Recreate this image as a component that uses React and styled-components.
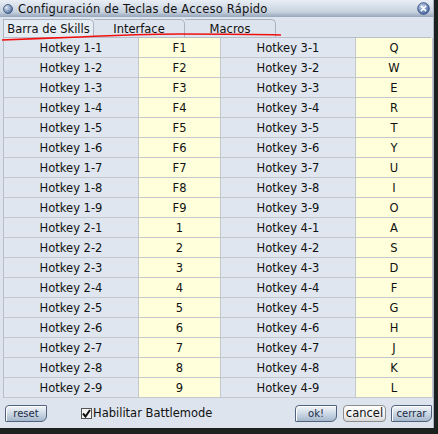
import styled, { createGlobalStyle } from 'styled-components'

const Global = createGlobalStyle`
  html, body {
    margin: 0;
    padding: 0;
    background: #1a211f;
  }
  body {
    font-family: "DejaVu Sans", Verdana, sans-serif;
  }
`

const Window = styled.div`
  position: relative;
  width: 434px;
  height: 428px;
  background: #dde4ee;
  display: flex;
  flex-direction: column;
  box-sizing: border-box;
  border-right: 1px solid #a7b2c2;
`

const TitleBar = styled.div`
  height: 17px;
  display: flex;
  align-items: center;
  gap: 5px;
  padding: 0 3px;
  background: linear-gradient(#e9eef5, #c7d2df 70%, #96a6bb);
  font-size: 11.5px;
  color: #111;
`

const TitleText = styled.span`
  flex: 1;
  white-space: nowrap;
  letter-spacing: 0.2px;
`

const Tabs = styled.div`
  height: 20px;
  display: flex;
  align-items: flex-end;
  padding-left: 3px;
`

const Tab = styled.div`
  width: 91px;
  height: 18px;
  box-sizing: border-box;
  border: 1px solid #aab3c0;
  border-bottom: none;
  border-left: ${({ first }) => (first ? '1px solid #aab3c0' : 'none')};
  border-radius: 0 5px 0 0;
  display: flex;
  align-items: center;
  justify-content: center;
  font-size: 11.5px;
  color: #111;
  background: ${({ active }) => (active ? '#e6ecf3' : '#dde4ee')};
`

const Table = styled.div`
  margin: 0 2px 0 3px;
  display: grid;
  grid-template-columns: 135px 82px 135px 77px;
  border-top: 1px solid #b9bfc8;
  border-left: 1px solid #b9bfc8;
`

const Cell = styled.div`
  height: 19px;
  border-right: 1px solid #c4c8cc;
  border-bottom: 1px solid #c4c8cc;
  display: flex;
  align-items: center;
  justify-content: center;
  font-size: 11.5px;
  color: #111;
  background: ${({ yellow }) => (yellow ? '#ffffdb' : '#dfe6ef')};
`

const Footer = styled.div`
  flex: 1;
  display: flex;
  align-items: center;
  padding: 0 1px 0 5px;
`

const Button = styled.button`
  height: 17px;
  padding: 0;
  margin-left: ${({ ml }) => ml || 0}px;
  width: ${({ w }) => w}px;
  font-family: "DejaVu Sans", Verdana, sans-serif;
  font-size: 10px;
  color: #1b2b44;
  border: 1px solid #50627c;
  border-radius: 4px 1px 6px 1px;
  background: linear-gradient(#f3f6fa, #c9d5e3 55%, #a5b7cc);
  box-shadow: inset 1px 1px 0 #ffffff;
`

const CancelButton = styled.button`
  height: 17px;
  width: 43px;
  margin-left: 6px;
  padding: 0;
  font-family: "DejaVu Sans", Verdana, sans-serif;
  font-size: 11.5px;
  color: #111;
  border: 1px solid #8d8d8d;
  border-radius: 4px;
  background: linear-gradient(#ffffff, #f0f0f0 60%, #d8d8d8);
`

const Check = styled.label`
  display: flex;
  align-items: center;
  gap: 1px;
  margin-left: 34px;
  font-size: 11.5px;
  color: #111;
`

const Box = styled.span`
  width: 11px;
  height: 11px;
  box-sizing: border-box;
  border: 1px solid #555;
  background: #f4f4f4;
  display: flex;
  align-items: center;
  justify-content: center;
`

const Spacer = styled.div`
  flex: 1;
`

const Scribble = styled.svg`
  position: absolute;
  left: 0;
  top: 28px;
  pointer-events: none;
`

const keys1 = ['F1', 'F2', 'F3', 'F4', 'F5', 'F6', 'F7', 'F8', 'F9', '1', '2', '3', '4', '5', '6', '7', '8', '9']
const keys2 = 'QWERTYUIOASDFGHJKL'.split('')

const rows = keys1.map((k, i) => {
  const g = Math.floor(i / 9)
  const n = (i % 9) + 1
  return {
    a: `Hotkey ${g + 1}-${n}`,
    b: k,
    c: `Hotkey ${g + 3}-${n}`,
    d: keys2[i],
  }
})

function App() {
  return (
    <>
      <Global />
      <Window>
        <TitleBar>
          <svg width="10" height="10" viewBox="0 0 10 10">
            <defs>
              <radialGradient id="ti" cx="0.35" cy="0.35" r="0.7">
                <stop offset="0" stopColor="#dfe8f5" />
                <stop offset="1" stopColor="#4b6a9a" />
              </radialGradient>
            </defs>
            <circle cx="5" cy="5" r="4.5" fill="url(#ti)" stroke="#36507a" strokeWidth="0.8" />
          </svg>
          <TitleText>Configuración de Teclas de Acceso Rápido</TitleText>
          <svg width="13" height="13" viewBox="0 0 13 13">
            <defs>
              <radialGradient id="cx" cx="0.4" cy="0.35" r="0.7">
                <stop offset="0" stopColor="#c9d8f0" />
                <stop offset="1" stopColor="#3f5d99" />
              </radialGradient>
            </defs>
            <circle cx="6.5" cy="6.5" r="5.8" fill="url(#cx)" stroke="#2f467a" strokeWidth="0.8" />
            <path d="M4.3 4.3 L8.7 8.7 M8.7 4.3 L4.3 8.7" stroke="#ffffff" strokeWidth="1.6" strokeLinecap="round" />
          </svg>
        </TitleBar>
        <Tabs>
          <Tab first active>Barra de Skills</Tab>
          <Tab>Interface</Tab>
          <Tab>Macros</Tab>
        </Tabs>
        <Table>
          {rows.map((r) => (
            <>
              <Cell key={r.a}>{r.a}</Cell>
              <Cell yellow>{r.b}</Cell>
              <Cell>{r.c}</Cell>
              <Cell yellow>{r.d}</Cell>
            </>
          ))}
        </Table>
        <Footer>
          <Button w={42}>reset</Button>
          <Check>
            <Box>
              <svg width="9" height="9" viewBox="0 0 9 9">
                <path d="M1 4.5 L3.5 7.5 L8 1" fill="none" stroke="#111" strokeWidth="2" />
              </svg>
            </Box>
            Habilitar Battlemode
          </Check>
          <Spacer />
          <Button w={42}>ok!</Button>
          <CancelButton>cancel</CancelButton>
          <Button w={41} ml={5}>cerrar</Button>
        </Footer>
        <Scribble width="290" height="16" viewBox="0 0 290 16">
          <path d="M2 12 C30 11 50 10 80 9 C120 7 150 6 180 6 C220 6 250 6 281 7" fill="none" stroke="#f01010" strokeWidth="1.6" />
        </Scribble>
      </Window>
    </>
  )
}

export default App
